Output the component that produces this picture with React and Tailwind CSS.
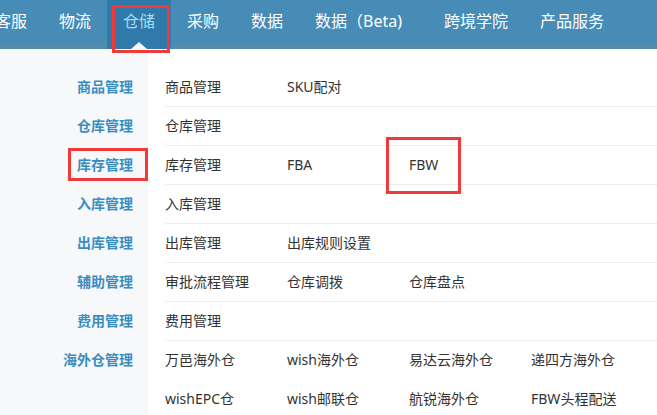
import React from "react";

const navItems = ["客服", "物流", "仓储", "采购", "数据", "数据（Beta)", "跨境学院", "产品服务"];

const groups = [
  { title: "商品管理", rows: [["商品管理", "SKU配对"]] },
  { title: "仓库管理", rows: [["仓库管理"]] },
  { title: "库存管理", rows: [["库存管理", "FBA", "FBW"]] },
  { title: "入库管理", rows: [["入库管理"]] },
  { title: "出库管理", rows: [["出库管理", "出库规则设置"]] },
  { title: "辅助管理", rows: [["审批流程管理", "仓库调拨", "仓库盘点"]] },
  { title: "费用管理", rows: [["费用管理"]] },
  {
    title: "海外仓管理",
    rows: [
      ["万邑海外仓", "wish海外仓", "易达云海外仓", "递四方海外仓"],
      ["wishEPC仓", "wish邮联仓", "航锐海外仓", "FBW头程配送"],
    ],
  },
];

function App() {
  return (
    <div
      className="relative h-[415px] w-[657px] overflow-hidden bg-white"
      style={{ fontFamily: '"Noto Sans", "Noto Sans CJK SC", sans-serif' }}
    >
      {/* Top nav */}
      <div className="flex h-[49px] bg-[linear-gradient(to_bottom,#468cb6_84%,#5b8ca6)]">
        <div className="ml-[-21px] flex">
          {navItems.map((n) => {
            const active = n === "仓储";
            return (
              <div
                key={n}
                className={
                  "relative flex h-[49px] items-start px-4 pt-[10px] text-[16px] leading-[22px] whitespace-nowrap " +
                  (active ? "bg-[#2f7aaa] text-[#a5dcf6]" : "text-white") +
                  (n === "数据（Beta)" ? " mr-[10px]" : "")
                }
              >
                {n}
                {active && (
                  <span className="absolute bottom-0 left-1/2 -ml-[8px] h-0 w-0 border-x-[8px] border-b-[7px] border-x-transparent border-b-[#f6f8fa]" />
                )}
              </div>
            );
          })}
        </div>
      </div>

      {/* Body */}
      <div className="flex h-[19px]">
        <div className="w-[148px] shrink-0 bg-[#f6f8fa]" />
      </div>
      {groups.map((g) => (
        <div key={g.title} className="flex">
          <div className="w-[148px] shrink-0 bg-[#f6f8fa] pr-[15px] text-right text-[14px] leading-[38px] font-bold text-[#3a8dc1]">
            {g.title}
          </div>
          <div className="ml-[17px] flex-1 border-b border-[#eeeeee]">
            {g.rows.map((r, i) => (
              <div key={i} className={"flex " + (i > 0 ? "h-[39px] leading-[39px]" : "h-[38px] leading-[38px]")}>
                {r.map((c) => (
                  <div key={c} className="w-[122px] shrink-0 text-[14px] whitespace-nowrap text-[#333333]">
                    {c}
                  </div>
                ))}
              </div>
            ))}
          </div>
        </div>
      ))}

      {/* annotation boxes */}
      <div className="absolute left-[112px] top-[5px] h-[48px] w-[58px] border-[3px] border-[#f03a3a]" />
      <div className="absolute left-[68px] top-[148px] h-[33px] w-[80px] border-[3px] border-[#f03a3a]" />
      <div className="absolute left-[386px] top-[137px] h-[57px] w-[75px] border-[3px] border-[#f03a3a]" />
    </div>
  );
}

export default App;
